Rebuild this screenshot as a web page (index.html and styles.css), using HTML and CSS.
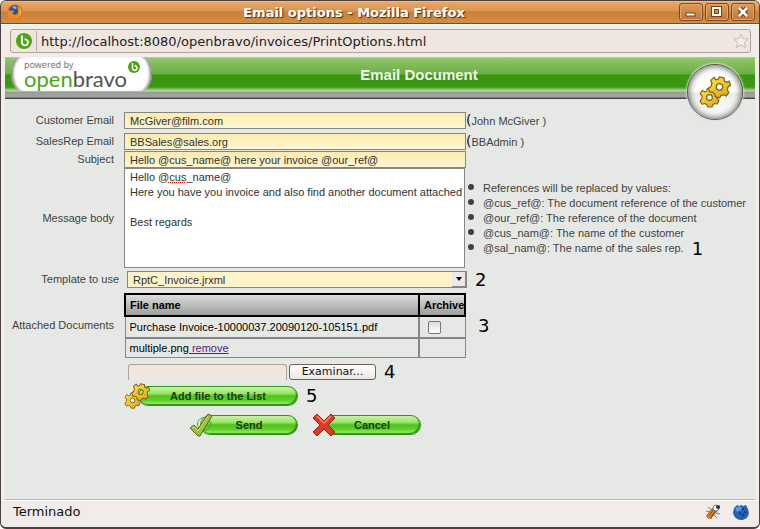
FILE: index.html
```html
<!DOCTYPE html>
<html lang="en">
<head>
<meta charset="utf-8">
<title>Email options - Mozilla Firefox</title>
<link rel="stylesheet" href="styles.css">
</head>
<body>
<svg class="defs" aria-hidden="true">
  <defs>
    <linearGradient id="gold" x1="0" y1="0" x2="1" y2="1"><stop offset="0" stop-color="#ffe545"/><stop offset="1" stop-color="#d9a514"/></linearGradient>
    <g id="cog">
      <path fill="url(#gold)" stroke="#7d6416" stroke-width="1" stroke-linejoin="round" d="M-2-8L2-8 2.500-5.800 4.500-5 6.500-6.500 8.500-3.500 6.700-2 6.800 1 8.500 2.500 7 5.800 4.700 5.300 2.800 6.500 2.300 8.500-1.500 8.500-2.300 6.500-4.300 5.300-6.700 6-8.500 3-6.800 1.200-6.700-1.500-8.300-3.500-6.300-6.500-4.300-5-2.500-5.800ZM0-2.600A2.600 2.600 0 1 0 0 2.600 2.600 2.600 0 1 0 0-2.600Z" fill-rule="evenodd"/>
    </g>
    <symbol id="gears" viewBox="0 0 32 32"><use href="#cog" transform="translate(10.500 21.500) scale(1.120)"/><use href="#cog" transform="translate(20.500 11) rotate(14) scale(1.230)"/></symbol>
    <symbol id="brand" viewBox="0 0 16 16"><circle cx="8" cy="8" r="8" fill="#4ba614"/><path d="M6 2.500V9a3 3 0 1 0 2.600-2.600" fill="none" stroke="#fff" stroke-width="1.900"/></symbol>
  </defs>
</svg>
<div class="window">
  <header class="titlebar">
    <svg class="fox" viewBox="0 0 16 16"><circle cx="8" cy="8" r="7.500" fill="#d9541e"/><circle cx="7.500" cy="6.500" r="5" fill="#2c5596"/><path d="M5 3l3-1 2 2-2 1-2-1z" fill="#8ab8e6"/><path d="M1 4c0 2 1 2 2 3 2-1 4 0 4 1-1 0-2 1-1 2 2 2 5 0 5-2 0-3-1-4 0-6 3 2 5 6 3 9-2 5-8 5-11 3S-.5 8 1 4z" fill="#ee8a22"/><path d="M12 3c3 3 3 8 0 10 2-3 2-6 0-10z" fill="#ffe04a"/></svg>
    <h1>Email options - Mozilla Firefox</h1>
    <div class="wincontrols">
      <button type="button" aria-label="Minimize"><svg viewBox="0 0 22 16"><rect x="6" y="9" width="9" height="3" fill="#fff" stroke="#75401a"/></svg></button>
      <button type="button" aria-label="Maximize"><svg viewBox="0 0 22 16"><rect x="7" y="4" width="7" height="7" fill="none" stroke="#75401a" stroke-width="4"/><rect x="7" y="4" width="7" height="7" fill="none" stroke="#fff" stroke-width="2"/></svg></button>
      <button type="button" aria-label="Close"><svg viewBox="0 0 22 16"><path d="M7.500 4.500l7 7m0-7l-7 7" stroke="#75401a" stroke-width="5"/><path d="M7 4l8 8m0-8l-8 8" stroke="#fff" stroke-width="2.500"/></svg></button>
    </div>
  </header>
  <div class="toolbar">
    <div class="address">
      <span class="favicon"><svg viewBox="0 0 16 16"><use href="#brand"/></svg></span>
      <input type="text" aria-label="Address" value="http://localhost:8080/openbravo/invoices/PrintOptions.html">
      <svg class="star" viewBox="0 0 16 16"><path d="M8 1l2 4.500 5 .5-3.500 3.500 1 5L8 12l-4.500 2.500 1-5L1 6l5-.5z" fill="#f3ebe8" stroke="#c5bbb6"/></svg>
    </div>
  </div>
  <main class="page">
    <div class="banner">
      <div class="logo">
        <span class="powered">powered by</span>
        <span class="wordmark"><b>open</b>bravo</span>
        <svg class="mark" viewBox="0 0 16 16"><use href="#brand"/></svg>
      </div>
      <h2>Email Document</h2>
      <div class="badge"><svg viewBox="0 0 32 32"><use href="#gears"/></svg></div>
    </div>
    <form class="form">
      <div class="row">
        <label for="customer">Customer Email</label>
        <input class="field" id="customer" type="text" value="McGiver@film.com">
        <div class="note"><span class="paren">(</span>John McGiver )</div>
      </div>
      <div class="row spaced">
        <label for="salesrep">SalesRep Email</label>
        <input class="field" id="salesrep" type="text" value="BBSales@sales.org">
        <div class="note"><span class="paren">(</span>BBAdmin )</div>
      </div>
      <div class="row subject">
        <label for="subject">Subject</label>
        <input class="field" id="subject" type="text" value="Hello @cus_name@ here your invoice @our_ref@">
      </div>
      <div class="row">
        <label for="body">Message body</label>
        <div class="message">
          <textarea id="body" spellcheck="false">Hello @cus_name@
Here you have you invoice and also find another document attached

Best regards</textarea>
          <span class="misspelt"></span>
        </div>
        <ul class="hints">
          <li>References will be replaced by values:</li>
          <li>@cus_ref@: The document reference of the customer</li>
          <li>@our_ref@: The reference of the document</li>
          <li>@cus_nam@: The name of the customer</li>
          <li>@sal_nam@: The name of the sales rep. <span class="callout">1</span></li>
        </ul>
      </div>
      <div class="row template">
        <label for="template">Template to use</label>
        <div class="select">
          <select id="template"><option>RptC_Invoice.jrxml</option></select>
          <span class="arrow"></span>
        </div>
        <span class="callout">2</span>
      </div>
      <div class="row attached">
        <span class="label">Attached Documents</span>
        <table>
          <thead><tr><th>File name</th><th class="archive">Archive</th></tr></thead>
          <tbody>
            <tr class="tall"><td>Purchase Invoice-10000037.20090120-105151.pdf</td><td><input type="checkbox" aria-label="Archive"></td></tr>
            <tr><td>multiple.png<a href="#"> remove</a></td><td></td></tr>
          </tbody>
        </table>
        <span class="callout side">3</span>
      </div>
      <div class="upload">
        <input type="text" aria-label="File to attach" readonly>
        <button type="button">Examinar...</button>
        <span class="callout side">4</span>
      </div>
      <div class="actions">
        <button type="button" class="pill wide"><svg viewBox="0 0 32 32"><use href="#gears"/></svg>Add file to the List</button>
        <span class="callout side">5</span>
      </div>
      <div class="actions submit">
        <button type="submit" class="pill"><svg viewBox="0 0 24 24"><circle cx="15" cy="11" r="6.500" fill="none" stroke="#45a83c"/><path d="M1 15l4-3 4 4L19 1l4 2L11 23H9z" fill="#a3bf38" stroke="#536b1b" stroke-linejoin="round"/><path d="M3 15l2-1 4 4L19 3" fill="none" stroke="#c7df65"/></svg>Send</button>
        <button type="button" class="pill"><svg viewBox="0 0 24 24"><path d="M5 1l7 7 7-7 4 4-7 7 7 7-4 4-7-7-7 7-4-4 7-7-7-7z" fill="#e13a22" stroke="#8f2418" stroke-linejoin="round"/><path d="M5 3l7 7 7-7" fill="none" stroke="#ff8064" stroke-width="1.500"/></svg>Cancel</button>
      </div>
    </form>
  </main>
  <footer class="status">
    <span>Terminado</span>
    <svg viewBox="0 0 16 16"><path d="M1 7l4 1M3 3l4 3M2 12l3-2M6 15l1-3M9 2l1 4M15 10l-4-1M12 14l-3-3" stroke="#887e75"/><path d="M2 11l6-7 4 3-6 7c-2 1-5-1-4-3z" fill="#ef8b2c" stroke="#94511d"/><path d="M4 12l5-7M6 13l4-6" stroke="#704421"/><circle cx="11" cy="4" r="3" fill="#fff" stroke="#777"/><circle cx="13" cy="3" r="2" fill="#333"/></svg>
    <svg viewBox="0 0 16 16"><path d="M4 1l2 1 2-1 2 1 3-1 2 4 1 4c-1 5-4 7-8 7S1 13 0 9l1-5z" fill="#2860b6"/><path d="M2 4l5-2 2 3-5 3z" fill="#5b99e4"/><circle cx="10" cy="5" r="1" fill="#102f75"/><circle cx="12" cy="8" r="1" fill="#102f75"/><circle cx="7" cy="9" r="1" fill="#102f75"/><circle cx="10" cy="11" r="1.500" fill="#153e8b"/></svg>
  </footer>
</div>
</body>
</html>
```
FILE: styles.css
```css
* { box-sizing: border-box; }
body { margin: 0; background: #fff; font: 11px "Liberation Sans", sans-serif; color: #404240; }
button, input, textarea, select { font: inherit; margin: 0; }
svg { display: block; }
.defs { position: absolute; width: 0; height: 0; }

.window { display: flex; flex-direction: column; min-height: 100vh; background: #f1ece9; border: 1px solid #4b4240; border-bottom-width: 2px; border-radius: 6px; overflow: hidden; }
.titlebar { display: flex; align-items: center; height: 23px; padding: 0 4px 0 6px; background: linear-gradient(#eba96a, #dc9450 45%, #c98037 50%, #d48d43); border-bottom: 1px solid #7b4b27; box-shadow: inset 0 1px #f1b983; }
.titlebar h1 { flex: 1; margin: 0; padding-left: 6px; text-align: center; font: bold 13px "DejaVu Sans", sans-serif; color: #fff; text-shadow: 1px 1px 1px #4a2c12; }
.fox { width: 16px; height: 16px; }
.wincontrols { display: flex; gap: 2px; }
.wincontrols button { width: 24px; height: 18px; padding: 0; border: 1px solid #7b4b27; border-radius: 3px; background: linear-gradient(#dc9b5b, #c27833); box-shadow: inset 0 0 0 1px #e2a66d; }

.toolbar { padding: 5px 8px 4px 9px; box-shadow: inset 0 1px #fff; }
.address { display: flex; align-items: center; height: 24px; padding: 0 1px 0 4px; background: #efe6e0; border: 1px solid #b0a299; border-radius: 3px; }
.favicon { padding: 2px 4px 2px 1px; border-right: 1px solid #b9aca3; }
.favicon svg { width: 16px; height: 16px; }
.address input { flex: 1; padding: 0 0 0 4px; border: 0; background: none; font: 13px "DejaVu Sans", sans-serif; color: #222; }
.star { width: 16px; height: 16px; }

.page { flex: 1; margin: 0 4px; background: #e6e8e6; border-bottom: 1px solid #b9b2ae; }
.banner { position: relative; display: flex; height: 42px; padding-bottom: 8px; background: linear-gradient(#b3cba3 0, #8fc467 2px, #69af43 17px, #3c9510 18px, #3b9913 30px, #b9e0a5 34px, #989a98 35px, #a5a7a5 40px, #464846 41px); }
.banner h2 { flex: 1; margin: 0; padding: 0 144px 0 75px; text-align: center; font: bold 15px/36px "Liberation Sans", sans-serif; color: #f2f6ee; }
.logo { width: 141px; height: 34px; margin-left: 6px; position: relative; padding: 2px 0 0 13px; background: #fff; border-radius: 10px 10px 12px 12px / 18px; box-shadow: inset 4px 0 3px -2px #777, inset -4px 0 3px -2px #777; }
.powered, .wordmark { display: block; }
.powered { font: 9px/12px "Noto Sans", sans-serif; color: #777; }
.wordmark { font: 22px/16px Lato, sans-serif; color: #505250; }
.wordmark b { font-weight: 400; color: #4ba614; }
.mark { position: absolute; right: 12px; top: 4px; width: 12px; height: 12px; }
.badge { position: absolute; right: 12px; top: 7px; width: 56px; height: 56px; display: grid; place-items: center; border-radius: 50%; background: linear-gradient(#fff 50%, #ecedeb 52%, #fff); border: 1px solid #555; box-shadow: inset 0 0 6px 1px #666, 0 0 2px 1px #d6ded0; }
.badge svg { width: 32px; height: 32px; }

.form { padding: 13px 0 0; }
.row { display: grid; grid-template-columns: 109px 342px 1fr; column-gap: 10px; }
.row label, .label { text-align: right; align-self: center; line-height: 15px; white-space: nowrap; }
.spaced { margin-top: 4px; }
.subject { margin-top: 1px; }
.field { height: 17px; width: 100%; padding: 1px 4px 0 5px; border: 1px solid #858785; background: linear-gradient(#fdeaae, #fff6d4); color: #303230; }
.note { height: 17px; margin-left: -10px; line-height: 17px; white-space: nowrap; }
.paren { font: 14px/16px "DejaVu Sans", sans-serif; color: #111; }
.message { position: relative; }
textarea { display: block; width: 341px; height: 100px; padding: 1px 0 1px 5px; border: 1px solid #858785; background: #fff; line-height: 15px; color: #303230; resize: none; overflow: hidden; }
.misspelt { position: absolute; left: 44px; top: 14px; width: 17px; border-bottom: 1px dotted #f00; }
.hints { align-self: center; margin: 0 0 0 -8px; padding: 0; list-style: none; line-height: 15px; white-space: nowrap; }
.hints li { display: flex; align-items: center; height: 15px; }
.hints li::before { content: ""; width: 6px; height: 6px; margin: 0 9px 3px 0; border-radius: 50%; background: #404240; }
.callout { font: 18px/15px "DejaVu Sans", sans-serif; color: #000; }
.hints .callout { margin-left: 8px; }
.template { grid-template-columns: 114px 340px 1fr; column-gap: 8px; margin-top: 3px; }
.select { position: relative; }
select { appearance: none; display: block; width: 100%; height: 17px; padding: 0 5px; border: 1px solid #858785; border-radius: 0; background: #fff3c9; color: #303230; }
.arrow { position: absolute; top: 1px; right: 0; width: 15px; height: 16px; background: #eee8e7; border: solid #858785; border-width: 0 2px 2px 0; pointer-events: none; }
.arrow::after { content: ""; position: absolute; left: 4px; top: 5px; border: 3px solid transparent; border-top: 4px solid #000; border-bottom: 0; }
.template .callout { align-self: center; }
.attached { margin-top: 5px; }
table { width: 342px; table-layout: fixed; border-collapse: collapse; color: #000; }
th, td { height: 19px; padding: 0 4px; border: 1px solid #858785; text-align: left; white-space: nowrap; }
th { height: 22px; border-color: #000; background: linear-gradient(#dcdedc, #9c9e9c); }
thead { border: 2px solid #000; }
th.archive { width: 46px; border-left-width: 2px; }
td + td { border-left-width: 2px; }
.tall td { height: 22px; border-bottom-width: 2px; }
td a { color: #551a8b; }
td input { appearance: none; display: block; width: 13px; height: 13px; margin-left: 4px; border: 1px solid #777; border-radius: 2px; background: linear-gradient(#ddd, #fff); }
.callout.side { align-self: center; }
.attached .side { margin-left: 2px; }
.upload, .actions { display: flex; align-items: center; }
.upload { margin: 6px 0 0 123px; }
.upload input { width: 159px; height: 16px; border: 1px solid #b0a299; border-bottom: 0; border-radius: 3px 3px 0 0; background: #efe6e0; }
.upload button { width: 87px; height: 16px; margin: 0 8px 0 2px; padding: 0; border: 1px solid #6e625b; border-radius: 3px; background: linear-gradient(#fff, #ece5e2); font: 11px/14px "DejaVu Sans", sans-serif; color: #111; }
.actions { margin: 6px 0 0 133px; gap: 8px; }
.submit { margin: 9px 0 0 195px; gap: 25px; }
.pill { position: relative; width: 98px; height: 20px; padding: 0; border: 1px solid #2c9a13; border-radius: 10px; background: linear-gradient(#c9f3a8, #9be568 35%, #4fc31d 50%, #62d12a 75%, #b6f28a); box-shadow: inset -1px -1px 1px #2b8a14; font-weight: bold; color: #163f09; }
.pill.wide { width: 160px; }
.pill svg { position: absolute; left: -12px; top: -3px; width: 24px; height: 24px; }
.pill.wide svg { left: -15px; top: -4px; width: 26px; height: 26px; }

.status { display: flex; align-items: center; gap: 12px; height: 27px; padding: 0 10px 4px 12px; font: 13px "DejaVu Sans", sans-serif; color: #111; box-shadow: inset 0 1px #fff; }
.status span { flex: 1; }
.status svg { width: 16px; height: 16px; }
```
